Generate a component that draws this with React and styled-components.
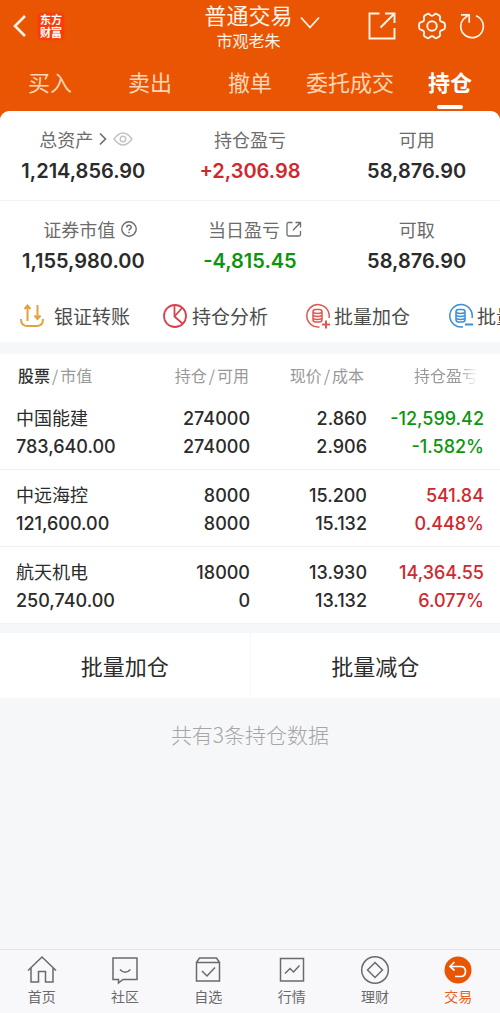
import styled, { createGlobalStyle, css } from "styled-components";

const GlobalStyle = createGlobalStyle`
  * {
    box-sizing: border-box;
  }
  body {
    margin: 0;
    background: #f6f7f9;
    font-family: "Noto Sans CJK SC", sans-serif;
    color: #2b2b2b;
  }
  button {
    margin: 0;
    padding: 0;
    border: 0;
    background: none;
    color: inherit;
    font: inherit;
    cursor: pointer;
  }
  a {
    color: inherit;
    text-decoration: none;
  }
  svg {
    display: block;
    flex: none;
  }
`;

const colors = {
  brand: "#ea5504",
  up: "#d0282e",
  down: "#0c960c",
  text: "#2b2b2b",
};

const Page = styled.div`
  display: flex;
  flex-direction: column;
  min-height: 100vh;
`;

const Header = styled.header`
  background: ${colors.brand};
  color: #fff4e8;
`;

const TitleBar = styled.div`
  display: grid;
  grid-template-columns: 1fr auto 1fr;
  align-items: center;
  height: 52px;
  padding: 0 15px 0 12px;
`;

const TitleLeft = styled.div`
  display: flex;
  align-items: center;
  gap: 10px;
`;

const Logo = styled.span`
  display: flex;
  flex-direction: column;
  padding: 0 2px 1px;
  border-radius: 4px;
  background: #fa3c0c;
  box-shadow: 0 0 2px #fa3c0c;
  color: #fff;
  font-size: 11px;
  font-weight: 700;
  line-height: 13px;
`;

const Title = styled.h1`
  margin: 0;
  font-size: 22px;
  font-weight: 400;
  line-height: 28px;
  text-align: center;
`;

const Account = styled.p`
  margin: 0;
  font-size: 16px;
  line-height: 24px;
  text-align: center;
`;

const TitleRight = styled.div`
  display: flex;
  align-items: center;
  justify-content: space-between;
  padding-left: 7px;
`;

const TitleTools = styled.div`
  display: flex;
  align-items: center;
`;

const AccountSwitch = styled.button`
  padding-bottom: 6px;
`;

const ToolButton = styled.button`
  margin-left: ${(props) => props.$gap || 0}px;
`;

const Tabs = styled.nav`
  display: grid;
  grid-template-columns: repeat(5, 1fr);
`;

const Tab = styled.a`
  display: flex;
  flex-direction: column;
  align-items: center;
  height: 59px;
  padding-top: 13px;
  color: #ffd5b5;
  font-size: 22px;
  line-height: 32px;
  white-space: nowrap;
  ${(props) =>
    props.$active &&
    css`
      color: #fff;
      font-weight: 700;

      &::after {
        content: "";
        width: 26px;
        height: 4px;
        margin-top: 8px;
        border-radius: 2px;
        background: #fff;
      }
    `}
`;

const SheetBack = styled.div`
  background: linear-gradient(${colors.brand} 20px, #fff 20px);
`;

const Sheet = styled.section`
  border-radius: 9px 9px 0 0;
  background: #fff;
`;

const SummaryRow = styled.dl`
  display: grid;
  grid-template-columns: repeat(3, 1fr);
  margin: 0;
  border-bottom: ${(props) => (props.$last ? 0 : 1)}px solid #f2f2f2;
`;

const SummaryCell = styled.div`
  display: flex;
  flex-direction: column;
  align-items: center;
  gap: 4px;
  padding: 16px 0 13px;
`;

const SummaryLabel = styled.dt`
  display: flex;
  align-items: center;
  gap: 6px;
  padding-left: ${(props) => props.$indent || 0}px;
  color: #6c6c6c;
  font-size: 18px;
  line-height: 24px;
`;

const toneColor = (props) => colors[props.$tone || "text"];

const SummaryValue = styled.dd`
  margin: 0;
  color: ${toneColor};
  font-family: Inter, sans-serif;
  font-size: 20px;
  font-weight: 600;
  line-height: 32px;
`;

const Actions = styled.div`
  display: flex;
  align-items: center;
  height: 52px;
  padding-left: 19px;
  overflow: hidden;
`;

const Action = styled.button`
  display: flex;
  flex: none;
  align-items: center;
  gap: ${(props) => props.$gap}px;
  width: 143px;
  color: #4c4c4c;
  font-size: 19px;
  line-height: 28px;
  white-space: nowrap;
`;

const Holdings = styled.section`
  margin-top: 12px;
  background: #fff;
`;

const Table = styled.table`
  width: 100%;
  border-collapse: collapse;
  table-layout: fixed;
`;

const HeadCell = styled.th`
  width: ${(props) => props.$width};
  height: 39px;
  padding: 2px ${(props) => props.$inset}px 0 0;
  color: #999;
  font-size: 16px;
  font-weight: 400;
  line-height: 24px;
  text-align: right;
  white-space: nowrap;

  &:first-child {
    padding-left: 18px;
    text-align: left;
  }
`;

const Strong = styled.span`
  color: #333;
  font-weight: 500;
`;

const Slash = styled.span`
  margin: 0 2px;
`;

const FadeOut = styled.span`
  mask-image: linear-gradient(to right, #000 70%, transparent);
`;

const HoldingRow = styled.tr`
  border-bottom: 1px solid #f2f2f2;
`;

const Cell = styled.td`
  padding: 12px 0 8px;
  color: ${toneColor};
  font-family: Inter, "Noto Sans CJK SC", sans-serif;
  font-size: 18px;
  font-weight: 550;
  line-height: 28px;
  text-align: right;

  &:first-child {
    padding-left: 16px;
    text-align: left;
  }
  &:last-child {
    padding-right: 16px;
  }
`;

const Line = styled.div`
  height: 28px;
`;

const StockName = styled(Line)`
  font-family: "Noto Sans CJK SC", sans-serif;
  font-weight: 400;
  line-height: 24px;
`;

const BatchBar = styled.div`
  display: grid;
  grid-template-columns: 1fr 1fr;
  gap: 1px;
  margin-top: 9px;
`;

const BatchButton = styled.button`
  height: 65px;
  padding-bottom: 2px;
  background: #fff;
  font-size: 22px;
  line-height: 32px;
`;

const Count = styled.p`
  margin: 20px 0 0;
  color: #a6a6a6;
  font-size: 21px;
  font-weight: 300;
  line-height: 32px;
  text-align: center;
`;

const BottomNav = styled.nav`
  display: grid;
  grid-template-columns: repeat(6, 1fr);
  margin-top: auto;
  border-top: 1px solid #e4e5e7;
  background: #f8f8fa;
`;

const NavItem = styled.a`
  display: flex;
  flex-direction: column;
  align-items: center;
  height: 63px;
  padding-top: 5px;
  color: ${(props) => (props.$active ? "#e4601c" : "#6a6a6a")};
  font-size: 14px;
  line-height: 22px;
`;

const Svg = ({ w = 24, h = w, sw = 2, color = "currentColor", children }) => (
  <svg
    width={w}
    height={h}
    viewBox={`0 0 ${w} ${h}`}
    fill="none"
    stroke={color}
    strokeWidth={sw}
    aria-hidden="true"
  >
    {children}
  </svg>
);

const BackIcon = () => (
  <Svg w={16} h={24} sw={2.6}>
    <path d="M13 2 3 12l10 10" />
  </Svg>
);

const ChevronIcon = () => (
  <Svg w={20} h={14} sw={1.8}>
    <path d="m1 1.500 9 10 9-10" />
  </Svg>
);

const OpenIcon = () => (
  <Svg w={28} sw={1.9}>
    <path d="M11.500 1.500H1.500v25h25V16" />
    <path d="M12.500 15.500 26 2M17 1.500h9.500V11" />
  </Svg>
);

const GearIcon = () => (
  <Svg w={28} sw={1.9}>
    <path
      strokeLinejoin="round"
      d="M8.800 2.300Q10.500 1.200 11.700 2.600 14 5 16.300 2.600 17.500 1.200 19.200 2.300L21 3.400Q22.600 4.500 22 6.200 21.300 9.300 24.500 10 26.700 10.400 26.900 12v4Q26.700 17.600 24.500 18 21.300 18.700 22 21.800 22.600 23.500 21 24.600L19.200 25.700Q17.500 26.800 16.300 25.400 14 23 11.700 25.400 10.500 26.800 8.800 25.700L7 24.600Q5.400 23.500 6 21.800 6.700 18.700 3.500 18 1.300 17.600 1.100 16v-4Q1.300 10.400 3.500 10 6.700 9.300 6 6.200 5.400 4.500 7 3.400Z"
    />
    <circle cx="14" cy="14" r="4.800" />
  </Svg>
);

const RefreshIcon = () => (
  <Svg w={26} sw={1.700}>
    <path d="M17 2.800A11.300 11.300 0 1 1 4.500 6L9.500 1.800" />
    <path d="M2 1.800h8.200v8" />
  </Svg>
);

const ArrowRightIcon = () => (
  <Svg w={8} h={14} sw={1.600}>
    <path d="m1 1.500 5.500 5.500L1 12.500" />
  </Svg>
);

const EyeIcon = () => (
  <Svg w={20} h={14} sw={1.400} color="#c3c3c3">
    <path d="M1 7q9-12 18 0-9 12-18 0Z" />
    <circle cx="10" cy="7" r="2.800" />
  </Svg>
);

const HelpIcon = () => (
  <Svg w={16} sw={1.400}>
    <circle cx="8" cy="8" r="7.200" />
    <path d="M5.700 6.500c0-3 4.600-3 4.600-.3 0 1.600-2.300 1.700-2.300 3.300M8 10.700v1.600" />
  </Svg>
);

const ShareIcon = () => (
  <Svg w={16} sw={1.300}>
    <path d="M6.500 1.500H2.500q-1.500 0-1.500 1.500v10.500q0 1.500 1.500 1.500H13q1.500 0 1.500-1.500V10" />
    <path d="M7 9.200 14 2M9.500 1.500h5v5" />
  </Svg>
);

const TransferIcon = () => (
  <Svg w={26} sw={2} color="#e3a23c">
    <path d="M2 16q0 7 6.500 7h9q6.500 0 6.500-7" />
    <path d="M8.500 18V2.500M5.500 6l3-3.500 3 3.500M18.500 2v14M15.500 12.500l3 3.500 3-3.500" />
  </Svg>
);

const PieIcon = () => (
  <Svg w={26} sw={1.800} color="#d9424e">
    <circle cx="13" cy="13" r="11" />
    <path d="M12.500 2v11.500l8.500 7.500M12.500 13.500 20 5" />
  </Svg>
);

const CoinsIcon = ({ color, minus }) => (
  <Svg w={26} sw={1.500} color={color}>
    <path d={minus ? "M15 23.800A11.200 11.200 0 1 1 24 15" : "M14.500 23.900A11.200 11.200 0 1 1 24 15"} />
    <rect x="8" y="6.500" width="9" height="12.500" rx="2.500" />
    <path d="M8 9.500q4.500 2 9 0M8 12.500q4.500 2 9 0M8 15.500q4.500 2 9 0" />
    <path strokeWidth="2" d={minus ? "M17 21.500h8" : "M17 21.500h8M21 17.500v8"} />
  </Svg>
);

const HomeIcon = () => (
  <Svg w={30} sw={1.500}>
    <path d="M1 15.500 15 2l14 13.500M4 13v14h7.500V16.500h7V27H26V13" />
  </Svg>
);

const ChatIcon = () => (
  <Svg w={30} sw={1.500}>
    <path d="M3 3h24v21.500H13L8.500 28v-3.500H3z" />
    <path d="M10 14.500q5 5.500 10.500 0" />
  </Svg>
);

const WatchIcon = () => (
  <Svg w={30} sw={1.500}>
    <path d="M3.500 7.500h23V26h-23zM3.500 7.500 6.500 3h17l3 4.500" />
    <path d="m9 16 5 5 8-8.500" />
  </Svg>
);

const MarketIcon = () => (
  <Svg w={30} sw={1.500}>
    <path d="M3.500 3.500h23V26h-23z" />
    <path d="m8 18.500 5-5 3.500 3.500 6-6.500" />
  </Svg>
);

const WealthIcon = () => (
  <Svg w={30} sw={1.500}>
    <circle cx="15" cy="15" r="13.300" />
    <path d="m15 7.500 7.500 7.500-7.500 7.500L7.500 15z" />
  </Svg>
);

const TradeIcon = () => (
  <Svg w={30} sw={1.700} color="#fff">
    <circle cx="15" cy="15" r="13.500" fill="#ea5504" stroke="none" />
    <path d="M11.500 7 7 11.500l4.500 4M7 11.500h10.500q5 0 5 5t-5 5H12" />
  </Svg>
);

const tabs = ["买入", "卖出", "撤单", "委托成交", "持仓"];

const holdings = [
  {
    name: "中国能建",
    value: "783,640.00",
    amount: "274000",
    available: "274000",
    price: "2.860",
    cost: "2.906",
    profit: "-12,599.42",
    rate: "-1.582%",
    tone: "down",
  },
  {
    name: "中远海控",
    value: "121,600.00",
    amount: "8000",
    available: "8000",
    price: "15.200",
    cost: "15.132",
    profit: "541.84",
    rate: "0.448%",
    tone: "up",
  },
  {
    name: "航天机电",
    value: "250,740.00",
    amount: "18000",
    available: "0",
    price: "13.930",
    cost: "13.132",
    profit: "14,364.55",
    rate: "6.077%",
    tone: "up",
  },
];

const navItems = [
  { label: "首页", icon: <HomeIcon /> },
  { label: "社区", icon: <ChatIcon /> },
  { label: "自选", icon: <WatchIcon /> },
  { label: "行情", icon: <MarketIcon /> },
  { label: "理财", icon: <WealthIcon /> },
  { label: "交易", icon: <TradeIcon />, active: true },
];

const Stat = ({ label, icon, indent, value, tone }) => (
  <SummaryCell>
    <SummaryLabel $indent={indent}>
      {label}
      {icon}
    </SummaryLabel>
    <SummaryValue $tone={tone}>{value}</SummaryValue>
  </SummaryCell>
);

const App = () => {
  return (
    <Page>
      <GlobalStyle />
      <Header>
        <TitleBar>
          <TitleLeft>
            <button aria-label="返回">
              <BackIcon />
            </button>
            <Logo>
              <span>东方</span>
              <span>财富</span>
            </Logo>
          </TitleLeft>
          <div>
            <Title>普通交易</Title>
            <Account>市观老朱</Account>
          </div>
          <TitleRight>
            <AccountSwitch aria-label="切换账户">
              <ChevronIcon />
            </AccountSwitch>
            <TitleTools>
              <ToolButton aria-label="打开">
                <OpenIcon />
              </ToolButton>
              <ToolButton aria-label="设置" $gap={22}>
                <GearIcon />
              </ToolButton>
              <ToolButton aria-label="刷新" $gap={13}>
                <RefreshIcon />
              </ToolButton>
            </TitleTools>
          </TitleRight>
        </TitleBar>
        <Tabs>
          {tabs.map((tab) => (
            <Tab href="#" key={tab} $active={tab === "持仓"}>
              {tab}
            </Tab>
          ))}
        </Tabs>
      </Header>

      <SheetBack>
        <Sheet>
          <SummaryRow>
            <Stat
              label="总资产"
              icon={
                <>
                  <ArrowRightIcon />
                  <EyeIcon />
                </>
              }
              indent={6}
              value="1,214,856.90"
            />
            <Stat label="持仓盈亏" value="+2,306.98" tone="up" />
            <Stat label="可用" value="58,876.90" />
          </SummaryRow>
          <SummaryRow $last>
            <Stat
              label="证券市值"
              icon={<HelpIcon />}
              indent={14}
              value="1,155,980.00"
            />
            <Stat
              label="当日盈亏"
              icon={<ShareIcon />}
              indent={10}
              value="-4,815.45"
              tone="down"
            />
            <Stat label="可取" value="58,876.90" />
          </SummaryRow>
          <Actions>
            <Action $gap={9}>
              <TransferIcon />
              银证转账
            </Action>
            <Action $gap={4}>
              <PieIcon />
              持仓分析
            </Action>
            <Action $gap={3}>
              <CoinsIcon color="#dc5a50" />
              批量加仓
            </Action>
            <Action $gap={3}>
              <CoinsIcon color="#3a8fd6" minus />
              批量减仓
            </Action>
          </Actions>
        </Sheet>
      </SheetBack>

      <Holdings>
        <Table>
          <thead>
            <tr>
              <HeadCell $width="27%" $inset={0}>
                <Strong>股票</Strong>
                <Slash>/</Slash>市值
              </HeadCell>
              <HeadCell $width="23%" $inset={1}>
                持仓<Slash>/</Slash>可用
              </HeadCell>
              <HeadCell $width="23.400%" $inset={3}>
                现价<Slash>/</Slash>成本
              </HeadCell>
              <HeadCell $inset={22}>
                <FadeOut>持仓盈亏</FadeOut>
              </HeadCell>
            </tr>
          </thead>
          <tbody>
            {holdings.map((item) => (
              <HoldingRow key={item.name}>
                <Cell>
                  <StockName>{item.name}</StockName>
                  <Line>{item.value}</Line>
                </Cell>
                <Cell>
                  <Line>{item.amount}</Line>
                  <Line>{item.available}</Line>
                </Cell>
                <Cell>
                  <Line>{item.price}</Line>
                  <Line>{item.cost}</Line>
                </Cell>
                <Cell $tone={item.tone}>
                  <Line>{item.profit}</Line>
                  <Line>{item.rate}</Line>
                </Cell>
              </HoldingRow>
            ))}
          </tbody>
        </Table>
      </Holdings>

      <BatchBar>
        <BatchButton>批量加仓</BatchButton>
        <BatchButton>批量减仓</BatchButton>
      </BatchBar>
      <Count>共有3条持仓数据</Count>

      <BottomNav>
        {navItems.map((item) => (
          <NavItem href="#" key={item.label} $active={item.active}>
            {item.icon}
            {item.label}
          </NavItem>
        ))}
      </BottomNav>
    </Page>
  );
};

export default App;
